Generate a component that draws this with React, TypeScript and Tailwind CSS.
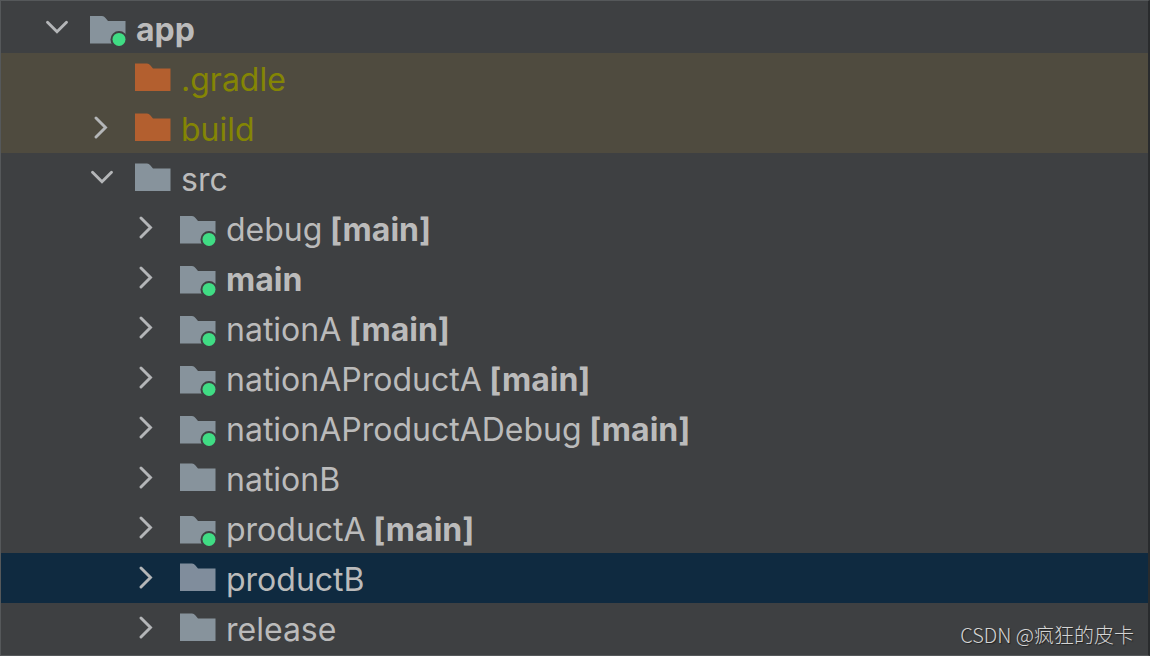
import React, { useState } from 'react';
import clsx from 'clsx';

type TreeNode = {
    name: string;
    sourceSet?: string;
    module?: boolean;
    excluded?: boolean;
    bold?: boolean;
    expandable?: boolean;
    children?: TreeNode[];
};

const project: TreeNode = {
    name: 'app',
    module: true,
    bold: true,
    children: [
        { name: '.gradle', excluded: true },
        { name: 'build', excluded: true, expandable: true },
        {
            name: 'src',
            children: [
                { name: 'debug', sourceSet: '[main]', module: true, expandable: true },
                { name: 'main', module: true, bold: true, expandable: true },
                { name: 'nationA', sourceSet: '[main]', module: true, expandable: true },
                { name: 'nationAProductA', sourceSet: '[main]', module: true, expandable: true },
                { name: 'nationAProductADebug', sourceSet: '[main]', module: true, expandable: true },
                { name: 'nationB', expandable: true },
                { name: 'productA', sourceSet: '[main]', module: true, expandable: true },
                { name: 'productB', expandable: true },
                { name: 'release', expandable: true },
            ],
        },
    ],
};

const indents = ['pl-11', 'pl-[89px]', 'pl-[134px]'];

const Chevron: React.FC<{ open: boolean }> = ({ open }) => (
    <svg viewBox="0 0 24 24" className="w-6 h-6" fill="none" stroke="#b4b6b8" strokeWidth="2.9" strokeLinecap="round">
        {open ? <path d="M2.5 6.2 L12 15.7 L21.5 6.2" /> : <path d="M6 2 L15.5 11.5 L6 21" />}
    </svg>
);

const Folder: React.FC<{ node: TreeNode; selected: boolean }> = ({ node, selected }) => (
    <svg viewBox="0 0 36 36" className="w-9 h-9 shrink-0" aria-hidden="true">
        <path
            d={node.module ? 'M0 6 H12 Q14 6 15.5 8 L18 11 H35.5 V33.5 H0 Z' : 'M0 3.5 H12 Q14 3.5 15.5 5.5 L18 8.5 H35.5 V31 H0 Z'}
            fill={node.excluded ? '#b35f2f' : selected ? '#808d9c' : '#87939c'}
        />
        {node.module && (
            <>
                <circle cx="29" cy="29.4" r="8.5" fill="#3e4042" />
                <circle cx="29" cy="29.4" r="6.5" fill="#40dc84" />
            </>
        )}
    </svg>
);

const TreeItem: React.FC<{
    node: TreeNode;
    level: number;
    selected: string;
    onSelect: (name: string) => void;
}> = ({ node, level, selected, onSelect }) => {
    const [open, setOpen] = useState(true);
    const hasToggle = Boolean(node.children || node.expandable);
    const isSelected = selected === node.name;

    return (
        <li role="treeitem" aria-selected={isSelected} aria-expanded={node.children ? open : undefined}>
            <div
                className={clsx(
                    'flex items-center h-[50px]',
                    indents[level],
                    isSelected ? 'bg-[#0f2a40]' : node.excluded && 'bg-[#4f4b3f]'
                )}
            >
                <div className="w-6 mr-[21px] shrink-0">
                    {hasToggle && (
                        <button type="button" aria-label={`Toggle ${node.name}`} className="block" onClick={() => setOpen(!open)}>
                            <Chevron open={Boolean(node.children) && open} />
                        </button>
                    )}
                </div>
                <button
                    type="button"
                    onClick={() => onSelect(node.name)}
                    className={clsx(
                        'flex items-center gap-2.5 whitespace-pre text-[32px] leading-9',
                        node.excluded ? 'text-[#848504]' : 'text-[#bbbbbb]'
                    )}
                >
                    <Folder node={node} selected={isSelected} />
                    <span className={clsx('pt-1', node.bold && 'font-bold')}>
                        {node.name}
                        {node.sourceSet && <b className="font-bold"> {node.sourceSet}</b>}
                    </span>
                </button>
            </div>
            {node.children && open && (
                <ul role="group">
                    {node.children.map((child) => (
                        <TreeItem key={child.name} node={child} level={level + 1} selected={selected} onSelect={onSelect} />
                    ))}
                </ul>
            )}
        </li>
    );
};

const App: React.FC = () => {
    const [selected, setSelected] = useState('productB');

    return (
        <main className="relative min-h-screen overflow-hidden bg-[#3e4042] border-t border-l border-b border-r-2 border-y-[#55585a] border-l-[#55585a] border-r-[#292b2d] pt-0.5 font-['Inter',sans-serif]">
            <ul role="tree" aria-label="Project">
                <TreeItem node={project} level={0} selected={selected} onSelect={setSelected} />
            </ul>
            <p className="absolute right-3.5 bottom-1.5 text-[20px] leading-7 font-light text-[#d4d4d4] font-['Noto_Sans_CJK_SC',sans-serif] [text-shadow:1px_1px_1px_#222]">
                CSDN @疯狂的皮卡
            </p>
        </main>
    );
};

export default App;
